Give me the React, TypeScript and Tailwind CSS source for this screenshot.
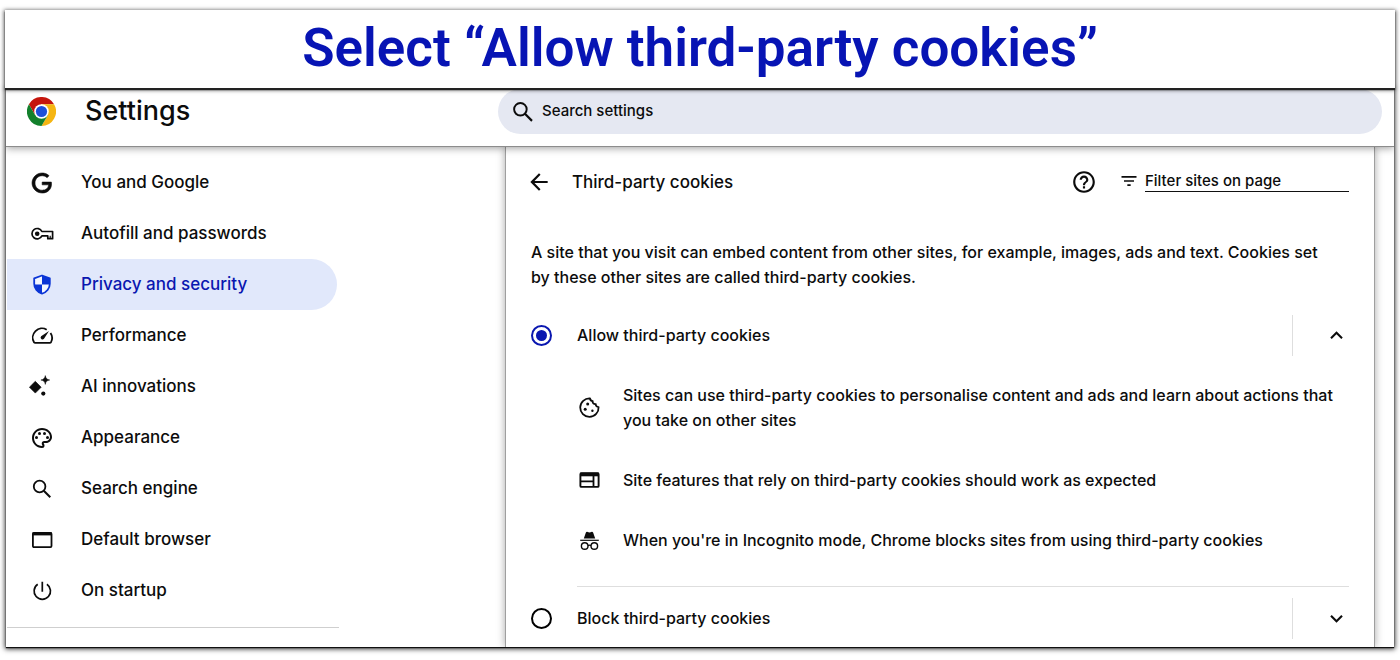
import { useState, type ReactNode } from "react";
import {
  MdArrowBack,
  MdExpandLess,
  MdExpandMore,
  MdFilterList,
  MdHelpOutline,
  MdOutlinePalette,
} from "react-icons/md";

function Icon({ children }: { children: ReactNode }) {
  return (
    <svg viewBox="0 0 24 24" className="size-6 shrink-0 overflow-visible" fill="none" aria-hidden="true">
      {children}
    </svg>
  );
}

function ChromeLogo() {
  return (
    <svg viewBox="0 0 48 48" className="size-[29px] shrink-0" aria-hidden="true">
      <path d="M3.2 12A24 24 0 0 1 44.8 12H24L13.6 30Z" fill="#c5150c" />
      <path d="M44.8 12A24 24 0 0 1 24 48L34.4 30 24 24V12Z" fill="#f5b512" />
      <path d="M24 48A24 24 0 0 1 3.2 12L13.6 30 24 24 34.4 30Z" fill="#13802c" />
      <circle cx="24" cy="24" r="12" fill="#fff" />
      <circle cx="24" cy="24" r="9.3" fill="#1d4fd8" />
    </svg>
  );
}

const GoogleIcon = (
  <Icon>
    <path
      fill="currentColor"
      d="M21.35 11.1h-9.17v2.73h6.51c-.33 3.81-3.5 5.44-6.5 5.44C8.36 19.27 5 16.25 5 12c0-4.1 3.2-7.27 7.2-7.27 3.09 0 4.9 1.97 4.9 1.97L19 4.72S16.56 2 12.1 2C6.42 2 2.03 6.8 2.03 12c0 5.05 4.13 10 10.22 10 5.35 0 9.25-3.67 9.25-9.09 0-1.15-.15-1.81-.15-1.81z"
      stroke="currentColor"
      strokeWidth="0.6"
    />
  </Icon>
);

const KeyIcon = (
  <Icon>
    <path d="M11.9 9.5H22.6V16.7H17.8V13.9H11.9A5.2 5.2 0 1 1 11.9 9.5Z" stroke="currentColor" strokeWidth="1.7" strokeLinejoin="round" />
    <circle cx="7.2" cy="11.7" r="2.3" fill="currentColor" />
    <path d="M20.2 13.7v2.6" stroke="currentColor" strokeWidth="1.2" />
  </Icon>
);

const ShieldIcon = (
  <Icon>
    <path d="M12 2.500 4.200 5.300v5.400c0 4.800 3.300 8.800 7.800 10 4.500-1.200 7.800-5.200 7.800-10V5.300Z" fill="#f4f7ff" stroke="#0b35d6" strokeWidth="1.800" strokeLinejoin="round" />
    <path d="M12 2.500v9h7.700l.1-.8V5.300Z" fill="#0b35d6" />
    <path d="M4.300 11.500H12v9.200C7.800 19.500 4.800 16 4.300 11.500Z" fill="#0b35d6" />
  </Icon>
);

const GaugeIcon = (
  <Icon>
    <path
      d="M16.700 5.700A9.200 9.200 0 0 0 4 18.200Q4.400 18.900 5.200 18.900H19.800Q20.600 18.900 21 18.200A9.200 9.200 0 0 0 20.500 8.900"
      stroke="currentColor"
      strokeWidth="1.800"
    />
    <path d="M19 6.900 14 14.800a1.900 1.900 0 1 1-2.900-2.500Z" fill="currentColor" />
  </Icon>
);

const SparkIcon = (
  <Icon>
    <path d="M5.300 6.300 11.200 12.200 5.300 18.100-.6 12.200Z" fill="currentColor" stroke="currentColor" strokeWidth="0.6" strokeLinejoin="round" />
    <path d="M15.300.6c.5 2.800 1.600 3.900 4.400 4.400-2.800.5-3.900 1.600-4.400 4.400-.5-2.800-1.600-3.900-4.400-4.400 2.800-.5 3.900-1.600 4.400-4.400Z" fill="currentColor" stroke="currentColor" strokeWidth="0.5" />
    <circle cx="13.300" cy="18.600" r="2.100" fill="currentColor" />
  </Icon>
);

const SearchIcon = (
  <Icon>
    <circle cx="9.600" cy="9.500" r="5.800" stroke="currentColor" strokeWidth="1.800" />
    <path d="m13.800 13.700 6.500 6.500" stroke="currentColor" strokeWidth="2" />
  </Icon>
);

const WindowIcon = (
  <Icon>
    <rect x="2.900" y="4.900" width="18.600" height="14.200" rx="1" stroke="currentColor" strokeWidth="1.800" />
    <path d="M2.500 5.900h19.400" stroke="currentColor" strokeWidth="3" />
  </Icon>
);

const PowerIcon = (
  <Icon>
    <path d="M12.300 2.800v10M7.700 5.300a8.200 8.200 0 1 0 9.200 0" stroke="currentColor" strokeWidth="1.700" />
  </Icon>
);

const CookieIcon = (
  <Icon>
    <path
      d="M13 2.400a9.200 9.200 0 1 0 8.600 8.700c-1.900-.1-3-1.200-2.800-3-2.200.2-3.400-1-3.100-3-1.600-.2-2.600-1.100-2.700-2.700Z"
      stroke="currentColor"
      strokeWidth="1.800"
      strokeLinejoin="round"
    />
    <circle cx="10.700" cy="7.900" r="1.500" fill="currentColor" />
    <circle cx="8.200" cy="13.300" r="1.500" fill="currentColor" />
    <circle cx="15.400" cy="14.800" r="1.200" fill="currentColor" />
  </Icon>
);

const SiteIcon = (
  <Icon>
    <rect x="3.400" y="4.300" width="18.200" height="13.600" rx="1" stroke="currentColor" strokeWidth="1.900" />
    <path d="M3 5.500h19" stroke="currentColor" strokeWidth="3.600" />
    <path d="M3.500 12.300h13M16.500 7v11" stroke="currentColor" strokeWidth="1.800" />
  </Icon>
);

const IncognitoIcon = (
  <Icon>
    <path d="M6.800 9.600 8.800 3.800c.3-.9 1-1.200 1.800-.9l1.900.6 1.900-.6c.8-.3 1.500 0 1.800.9l2 5.800Z" fill="currentColor" />
    <path d="M3.200 11.300h18.600" stroke="currentColor" strokeWidth="1.200" />
    <circle cx="7.700" cy="17" r="3.300" stroke="currentColor" strokeWidth="1.400" />
    <circle cx="17.300" cy="17" r="3.300" stroke="currentColor" strokeWidth="1.400" />
    <path d="M11 16.700c1-.7 2-.7 3 0" stroke="currentColor" strokeWidth="1.300" />
  </Icon>
);

const navItems: { label: string; icon: ReactNode }[] = [
  { label: "You and Google", icon: GoogleIcon },
  { label: "Autofill and passwords", icon: KeyIcon },
  { label: "Privacy and security", icon: ShieldIcon },
  { label: "Performance", icon: GaugeIcon },
  { label: "AI innovations", icon: SparkIcon },
  { label: "Appearance", icon: <MdOutlinePalette className="size-6 shrink-0" /> },
  { label: "Search engine", icon: SearchIcon },
  { label: "Default browser", icon: WindowIcon },
  { label: "On startup", icon: PowerIcon },
];

const details: { text: string; icon: ReactNode }[] = [
  {
    text: "Sites can use third-party cookies to personalise content and ads and learn about actions that you take on other sites",
    icon: CookieIcon,
  },
  { text: "Site features that rely on third-party cookies should work as expected", icon: SiteIcon },
  { text: "When you're in Incognito mode, Chrome blocks sites from using third-party cookies", icon: IncognitoIcon },
];

function OptionRow({
  label,
  checked,
  expanded,
  onSelect,
}: {
  label: string;
  checked: boolean;
  expanded: boolean;
  onSelect: () => void;
}) {
  return (
    <div className="flex h-[41px] items-center">
      <label className="flex flex-1 items-center gap-[25px]">
        <input
          type="radio"
          name="cookies"
          checked={checked}
          onChange={onSelect}
          className="grid size-[21px] appearance-none place-items-center rounded-full border-2 border-black before:size-[11px] before:rounded-full checked:border-[#0a17b0] checked:before:bg-[#0a17b0]"
        />
        {label}
      </label>
      <div className="flex h-full w-[57px] items-center justify-end border-l border-[#dedede]">
        <button type="button" aria-label={`Details for ${label}`} aria-expanded={expanded}>
          {expanded ? <MdExpandLess className="size-[25px]" /> : <MdExpandMore className="size-[25px]" />}
        </button>
      </div>
    </div>
  );
}

export default function App() {
  const [choice, setChoice] = useState("allow");
  return (
    <div className="bg-white px-[5px] pt-[10px] pb-3 font-['Inter','Liberation_Sans',sans-serif] text-[17px] font-medium text-[#0c0c0c]">
      <div className="relative z-10 flex h-[78px] items-center justify-center bg-white shadow-[0_2px_1px_#222,0_1px_4px_1px_rgba(0,0,0,0.65)]">
        <h1 className="font-['Roboto',sans-serif] text-[53px] font-semibold text-[#0714b4]">
          Select “Allow third-party cookies”
        </h1>
      </div>

      <div className="mx-px overflow-hidden bg-white shadow-[0_1px_1px_#111,0_1px_5px_1px_rgba(0,0,0,0.8)]">
        <header className="relative flex items-center border-b border-[#8c8c8c] bg-white pt-px pr-3 pb-3 pl-[21px] shadow-[0_1px_8px_rgba(0,0,0,0.4)]">
          <div className="flex w-[471px] shrink-0 items-center gap-[29px]">
            <ChromeLogo />
            <h2 className="text-[27px]">Settings</h2>
          </div>
          <label className="flex h-[45px] flex-1 items-center gap-[6px] rounded-full bg-[#e5e8f2] pl-3">
            <span className="[&>svg]:size-[26px]">{SearchIcon}</span>
            <input
              type="search"
              aria-label="Search settings"
              placeholder="Search settings"
              className="w-full bg-transparent text-[15px] outline-none placeholder:text-[#0c0c0c]"
            />
          </label>
        </header>

        <div className="flex">
          <nav className="w-[499px] shrink-0 pt-[10px]">
            <ul>
              {navItems.map((item) => {
                const active = item.label === "Privacy and security";
                return (
                  <li key={item.label}>
                    <a
                      href="#"
                      aria-current={active ? "page" : undefined}
                      className={
                        "ml-px flex h-[51px] w-[330px] items-center gap-[27px] rounded-r-full pl-[23px] " +
                        (active ? "bg-[#e1e8fb] text-[#0a17b0]" : "")
                      }
                    >
                      {item.icon}
                      {item.label}
                    </a>
                  </li>
                );
              })}
            </ul>
            <hr className="mt-[11px] ml-px w-[332px] border-[#cfcfcf]" />
          </nav>

          <main className="mr-[19px] flex-1 border-x border-[#9f9f9f] px-[25px] pt-[15px] pb-2 leading-[25px] shadow-[0_0_8px_rgba(0,0,0,0.35)]">
            <div className="flex h-10 items-center">
              <button type="button" aria-label="Back">
                <MdArrowBack className="-ml-[5px] size-[26px]" />
              </button>
              <h2 className="ml-[20px] flex-1">Third-party cookies</h2>
              <button type="button" aria-label="Help">
                <MdHelpOutline className="size-[26px]" />
              </button>
              <label className="ml-[22px] flex items-center gap-[6px] pb-0.5">
                <MdFilterList className="size-5" />
                <input
                  type="search"
                  aria-label="Filter sites on page"
                  placeholder="Filter sites on page"
                  className="h-[22px] w-[204px] border-b border-[#111] bg-transparent text-[15px] outline-none placeholder:text-[#0c0c0c]"
                />
              </label>
            </div>

            <p className="mt-[38px] max-w-[808px] text-[16px]">
              A site that you visit can embed content from other sites, for example, images, ads and text. Cookies set by
              these other sites are called third-party cookies.
            </p>

            <div className="mt-[25px] text-[16px]">
              <OptionRow
                label="Allow third-party cookies"
                checked={choice === "allow"}
                expanded
                onSelect={() => setChoice("allow")}
              />
              <div className="mt-[27px] ml-[46px]">
                <ul className="flex flex-col gap-[35px]">
                  {details.map((detail) => (
                    <li key={detail.text} className="flex items-center gap-[22px]">
                      {detail.icon}
                      <span>{detail.text}</span>
                    </li>
                  ))}
                </ul>
                <hr className="mt-[33px] border-[#dedede]" />
              </div>
              <div className="mt-[11px]">
                <OptionRow
                  label="Block third-party cookies"
                  checked={choice === "block"}
                  expanded={false}
                  onSelect={() => setChoice("block")}
                />
              </div>
            </div>
          </main>
        </div>
      </div>
    </div>
  );
}
